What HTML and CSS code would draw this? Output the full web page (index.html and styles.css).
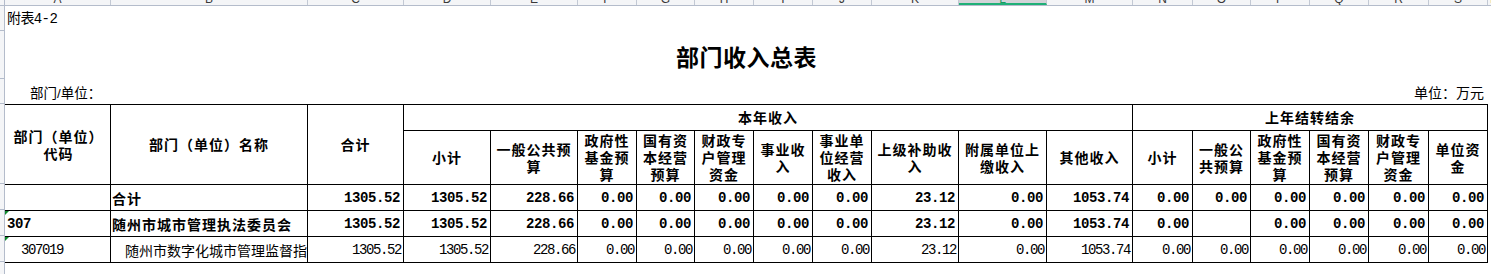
FILE: index.html
```html
<!DOCTYPE html>
<html lang="zh-CN">
<head>
<meta charset="utf-8">
<title>部门收入总表</title>
<link rel="stylesheet" href="styles.css">
</head>
<body>
<div class="sheet">
  <div class="colbar">
    <div class="corner"></div>
    <div class="ch w106"><span>A</span></div>
    <div class="ch w197"><span>B</span></div>
    <div class="ch w96"><span>C</span></div>
    <div class="ch w87"><span>D</span></div>
    <div class="ch w87"><span>E</span></div>
    <div class="ch w59"><span>F</span></div>
    <div class="ch w58"><span>G</span></div>
    <div class="ch w59"><span>H</span></div>
    <div class="ch w59"><span>I</span></div>
    <div class="ch w59"><span>J</span></div>
    <div class="ch w87"><span>K</span></div>
    <div class="ch w88 sel"><span>L</span></div>
    <div class="ch w86"><span>M</span></div>
    <div class="ch w60"><span>N</span></div>
    <div class="ch w58"><span>O</span></div>
    <div class="ch w59"><span>P</span></div>
    <div class="ch w59"><span>Q</span></div>
    <div class="ch w60"><span>R</span></div>
    <div class="ch w59"><span>S</span></div>
    <div class="ch rest"><span>T</span></div>
  </div>
  <div class="main">
    <div class="rowbar">
      <div class="rh h25"></div>
      <div class="rh h48"></div>
      <div class="rh h25"></div>
      <div class="rh h80"></div>
      <div class="rh h26"></div>
      <div class="rh h26"></div>
      <div class="rh h26"></div>
    </div>
    <div class="content">
      <div class="note">附表4-2</div>
      <div class="title">部门收入总表</div>
      <div class="meta"><span>部门/单位：</span><span class="unit">单位：万元</span></div>
      <div class="grid">
        <div class="c hd r2 first">部门（单位）<br>代码</div>
        <div class="c hd r2">部门（单位）名称</div>
        <div class="c hd r2">合计</div>
        <div class="c hd s10">本年收入</div>
        <div class="c hd s6">上年结转结余</div>

        <div class="c hd">小计</div>
        <div class="c hd">一般公共预<br>算</div>
        <div class="c hd">政府性<br>基金预<br>算</div>
        <div class="c hd">国有资<br>本经营<br>预算</div>
        <div class="c hd">财政专<br>户管理<br>资金</div>
        <div class="c hd">事业收<br>入</div>
        <div class="c hd">事业单<br>位经营<br>收入</div>
        <div class="c hd">上级补助收<br>入</div>
        <div class="c hd">附属单位上<br>缴收入</div>
        <div class="c hd">其他收入</div>
        <div class="c hd">小计</div>
        <div class="c hd">一般公<br>共预算</div>
        <div class="c hd">政府性<br>基金预<br>算</div>
        <div class="c hd">国有资<br>本经营<br>预算</div>
        <div class="c hd">财政专<br>户管理<br>资金</div>
        <div class="c hd">单位资<br>金</div>

        <div class="c b first"></div>
        <div class="c b t">合计</div>
        <div class="c b n">1305.52</div>
        <div class="c b n">1305.52</div>
        <div class="c b n">228.66</div>
        <div class="c b n">0.00</div>
        <div class="c b n">0.00</div>
        <div class="c b n">0.00</div>
        <div class="c b n">0.00</div>
        <div class="c b n">0.00</div>
        <div class="c b n">23.12</div>
        <div class="c b n">0.00</div>
        <div class="c b n">1053.74</div>
        <div class="c b n">0.00</div>
        <div class="c b n">0.00</div>
        <div class="c b n">0.00</div>
        <div class="c b n">0.00</div>
        <div class="c b n">0.00</div>
        <div class="c b n">0.00</div>

        <div class="c b first code"><i class="tri"></i>307</div>
        <div class="c b t">随州市城市管理执法委员会</div>
        <div class="c b n">1305.52</div>
        <div class="c b n">1305.52</div>
        <div class="c b n">228.66</div>
        <div class="c b n">0.00</div>
        <div class="c b n">0.00</div>
        <div class="c b n">0.00</div>
        <div class="c b n">0.00</div>
        <div class="c b n">0.00</div>
        <div class="c b n">23.12</div>
        <div class="c b n">0.00</div>
        <div class="c b n">1053.74</div>
        <div class="c b n">0.00</div>
        <div class="c b n"></div>
        <div class="c b n">0.00</div>
        <div class="c b n">0.00</div>
        <div class="c b n">0.00</div>
        <div class="c b n">0.00</div>

        <div class="c r first code sub"><i class="tri"></i>307019</div>
        <div class="c r t sub2">随州市数字化城市管理监督指挥中心</div>
        <div class="c r n">1305.52</div>
        <div class="c r n">1305.52</div>
        <div class="c r n">228.66</div>
        <div class="c r n">0.00</div>
        <div class="c r n">0.00</div>
        <div class="c r n">0.00</div>
        <div class="c r n">0.00</div>
        <div class="c r n">0.00</div>
        <div class="c r n">23.12</div>
        <div class="c r n">0.00</div>
        <div class="c r n">1053.74</div>
        <div class="c r n">0.00</div>
        <div class="c r n">0.00</div>
        <div class="c r n">0.00</div>
        <div class="c r n">0.00</div>
        <div class="c r n">0.00</div>
        <div class="c r n">0.00</div>
      </div>
    </div>
  </div>
</div>
</body>
</html>
```
FILE: styles.css
```css
html, body {
  margin: 0;
  padding: 0;
  background: #ffffff;
}
body {
  width: 1491px;
  height: 274px;
  overflow: hidden;
  font-family: "Noto Sans CJK SC", "Liberation Sans", sans-serif;
  color: #000;
}
.sheet {
  display: flex;
  flex-direction: column;
}
/* Excel column header strip */
.colbar {
  display: flex;
  height: 5px;
  background: #f4f5f7;
  border-bottom: 1px solid #b4bccb;
  overflow: hidden;
}
.corner {
  width: 4px;
  flex: none;
  border-right: 1px solid #b4bccb;
}
.ch {
  flex: none;
  box-sizing: border-box;
  border-right: 1px solid #c3c9d4;
  overflow: hidden;
  text-align: center;
  font: 12px "Liberation Sans", sans-serif;
  color: #3a3a3a;
}
.ch span {
  display: block;
  line-height: 12px;
  margin-top: -7px;
}
.ch.sel {
  background: #d2d4d8;
  border-bottom: 2px solid #1fb077;
  color: #1a9a60;
}
.ch.rest { flex: 1; border-right: none; }
.w106 { width: 106px; }
.w197 { width: 197px; }
.w96 { width: 96px; }
.w87 { width: 87px; }
.w88 { width: 88px; }
.w86 { width: 86px; }
.w60 { width: 60px; }
.w59 { width: 59px; }
.w58 { width: 58px; }

.main {
  display: flex;
}
.rowbar {
  width: 4px;
  flex: none;
  background: #f4f5f7;
  border-right: 1px solid #b4bccb;
  height: 268px;
  display: flex;
  flex-direction: column;
}
.rh {
  box-sizing: border-box;
  border-bottom: 1px solid #b4bccb;
  flex: none;
}
.h25 { height: 25px; }
.h48 { height: 48px; }
.h80 { height: 80px; }
.h26 { height: 26px; }

.content {
  width: 1483px;
  flex: none;
}
.note {
  height: 25px;
  line-height: 26px;
  padding-left: 2px;
  font-family: "Liberation Mono", "Noto Sans CJK SC", monospace;
  font-size: 14px;
  letter-spacing: -0.6px;
}
.title {
  height: 48px;
  box-sizing: border-box;
  padding-top: 3px;
  line-height: 44px;
  text-align: center;
  font-size: 23px;
  font-weight: 700;
  letter-spacing: 0.5px;
}
.meta {
  height: 25px;
  display: flex;
  justify-content: space-between;
  align-items: center;
  padding-left: 25px;
  padding-right: 4px;
  font-size: 14px;
  font-family: "Liberation Sans", "Noto Sans CJK SC", sans-serif;
}
.meta span:first-child { font-size: 13.5px; }

.grid {
  display: grid;
  grid-template-columns: 106px 197px 96px 87px 87px 59px 58px 59px 59px 59px 87px 88px 86px 60px 58px 59px 59px 60px 59px;
  grid-template-rows: 26px 54px 26px 26px 26px;
  border-top: 1px solid #000;
}
.c {
  box-sizing: border-box;
  border-right: 1px solid #000;
  border-bottom: 1px solid #000;
  display: flex;
  align-items: center;
  overflow: hidden;
  white-space: nowrap;
  position: relative;
}
.hd {
  justify-content: center;
  text-align: center;
  white-space: normal;
  font-size: 14px;
  font-weight: 700;
  letter-spacing: 1px;
  line-height: 17px;
}
.r2 { grid-row: span 2; }
.s10 { grid-column: span 10; }
.s6 { grid-column: span 6; }
.first { padding-left: 2px; }
.t {
  justify-content: flex-start;
  padding-left: 1px;
}
.b {
  font-weight: 700;
  font-size: 14px;
  letter-spacing: 1px;
}
.r {
  font-weight: 400;
  font-size: 14px;
}
.n {
  justify-content: flex-end;
  font-family: "Liberation Mono", monospace;
  font-size: 14px;
  padding-right: 3px;
}
.b.n { letter-spacing: -0.4px; }
.r.n { letter-spacing: -1.4px; padding-right: 2px; }
.code {
  font-family: "Liberation Mono", monospace;
}
.b.code { letter-spacing: -0.4px; }
.r.code { letter-spacing: -1.4px; }
.sub { padding-left: 16px; }
.sub2 { padding-left: 14px; }
.tri {
  position: absolute;
  left: 0;
  top: 0;
  width: 0;
  height: 0;
  border-top: 4px solid #0f8a2c;
  border-right: 4px solid transparent;
}
```
